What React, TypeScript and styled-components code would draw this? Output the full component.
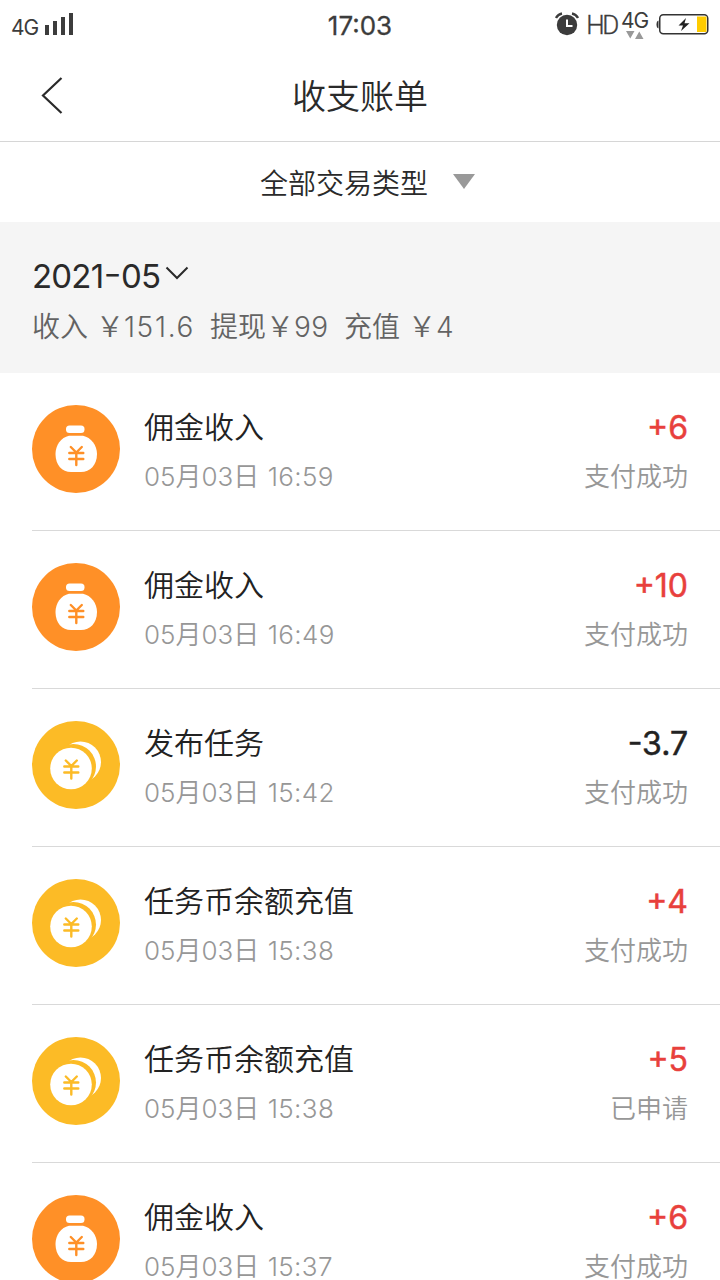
import React from 'react';
import styled, { createGlobalStyle } from 'styled-components';

const GlobalStyle = createGlobalStyle`
  * { box-sizing: border-box; }
  html, body { margin: 0; padding: 0; background: #fff; }
  body {
    height: 1280px;
    overflow: hidden;
    font-family: Inter, "Noto Sans CJK SC", sans-serif;
    color: #2a2a2a;
  }
`;

const Screen = styled.main`
  width: 720px;
  height: 1280px;
  overflow: hidden;
  display: flex;
  flex-direction: column;
  background: #fff;
`;

const StatusBar = styled.header`
  flex: none;
  height: 50px;
  display: grid;
  grid-template-columns: 1fr auto 1fr;
  align-items: center;
  padding: 0 11px;
  color: #3c3c3c;
`;

const StatusGroup = styled.div<{ $end?: boolean }>`
  display: flex;
  align-items: center;
  height: 50px;
  justify-content: ${(p) => (p.$end ? 'flex-end' : 'flex-start')};
`;

const Carrier = styled.span`
  font: 400 21px/24px Inter, sans-serif;
  letter-spacing: -1px;
  margin: 5px 7px 0 0;
`;

const Clock = styled.span`
  font: 400 26px/30px Inter, sans-serif;
  font-feature-settings: "case";
  -webkit-text-stroke: 0.3px currentColor;
  padding-top: 2px;
`;

const HdLabel = styled.span`
  font: 300 26px/28px Roboto, sans-serif;
  -webkit-text-stroke: 0.3px currentColor;
  letter-spacing: -2.4px;
  margin: 0 4px 0 7px;
`;

const Network = styled.div`
  display: flex;
  flex-direction: column;
  align-items: center;
  gap: 1px;
  width: 27px;
  margin: 0 8px 0 0;
`;

const NetworkLabel = styled.span`
  font: 400 21px/18px Inter, sans-serif;
  letter-spacing: -1px;
`;

const NavBar = styled.nav`
  flex: none;
  height: 92px;
  display: grid;
  grid-template-columns: 104px 1fr 104px;
  align-items: center;
  border-bottom: 1px solid #d6d6d6;
`;

const BackButton = styled.button`
  border: 0;
  background: none;
  padding: 0 0 2px 40px;
  height: 91px;
  display: flex;
  align-items: center;
`;

const Title = styled.h1`
  margin: 0;
  padding-top: 2px;
  text-align: center;
  font-size: 34px;
  line-height: 48px;
  font-weight: 350;
`;

const Filter = styled.button`
  flex: none;
  height: 80px;
  border: 0;
  background: #fff;
  display: flex;
  justify-content: center;
  align-items: center;
  gap: 25px;
  padding: 4px 0 0 15px;
  font: 350 28px/40px Inter, "Noto Sans CJK SC", sans-serif;
  color: #2a2a2a;
`;

const FilterArrow = styled.svg`
  display: block;
  flex: none;
  margin-bottom: 6px;
`;

const Summary = styled.section`
  flex: none;
  height: 151px;
  background: #f5f5f5;
  padding: 32px;
`;

const Month = styled.div`
  display: flex;
  align-items: center;
  gap: 5px;
  height: 44px;
  font-size: 33px;
  line-height: 44px;
  font-weight: 400;
  letter-spacing: -0.8px;
  color: #2a2a2a;
`;

const MonthDash = styled.span`
  font-size: 41px;
  line-height: 0;
  font-weight: 300;
`;

const MonthArrow = styled.svg`
  display: block;
  flex: none;
  margin-bottom: 6px;
`;

const Totals = styled.div`
  display: flex;
  margin-top: 9px;
  font-size: 28px;
  line-height: 40px;
  font-weight: 350;
  color: #636363;
  white-space: pre;
`;

const Total = styled.span<{ $width: number }>`
  width: ${(p) => p.$width}px;
`;

const Figure = styled.span<{ $spacing: number }>`
  letter-spacing: ${(p) => p.$spacing}px;
`;

const List = styled.ul`
  list-style: none;
  margin: 0;
  padding: 0 0 0 32px;
`;

const Row = styled.li`
  height: 158px;
  display: flex;
  align-items: flex-start;
  padding: 32px 32px 0 0;
  border-bottom: 1px solid #d9d9d9;
`;

const Details = styled.div`
  flex: 1;
  padding-left: 24px;
`;

const Outcome = styled.div`
  text-align: right;
`;

const Kind = styled.div`
  font-size: 30px;
  line-height: 44px;
  font-weight: 350;
  color: #222;
`;

const Meta = styled.div`
  margin-top: 8px;
  font-size: 26px;
  line-height: 40px;
  font-weight: 350;
  color: #979797;
`;

const Time = styled.span`
  letter-spacing: 0.4px;
  padding-left: 1px;
`;

const Amount = styled.div<{ $income: boolean }>`
  padding-top: 1px;
  font-size: 32px;
  line-height: 43px;
  font-weight: 400;
  -webkit-text-stroke: 0.5px currentColor;
  font-feature-settings: "case";
  color: ${(p) => (p.$income ? '#e8403c' : '#222')};
`;

const Glyph = styled.svg`
  display: block;
  flex: none;
`;

const SignalIcon = () => (
  <Glyph width="30" height="26" viewBox="0 0 30 26" fill="#3c3c3c">
    <rect x="0" y="13" width="4" height="10" />
    <rect x="8" y="9" width="4" height="14" />
    <rect x="16" y="5" width="4" height="18" />
    <rect x="24" y="1" width="4" height="22" />
  </Glyph>
);

const AlarmIcon = () => (
  <Glyph width="24" height="26" viewBox="0 0 24 26" fill="none">
    <circle cx="12" cy="13" r="10.200" fill="#3c3c3c" />
    <path d="M1 6A9 9 0 0 1 7 1.500M23 6A9 9 0 0 0 17 1.500" stroke="#3c3c3c" strokeWidth="2.400" />
    <path d="M12 7.500V14H17.500" stroke="#fff" strokeWidth="2" />
  </Glyph>
);

const TrafficIcon = () => (
  <Glyph width="18" height="8" viewBox="0 0 18 8" fill="#999">
    <path d="M0 0H8.500L4.250 7.500ZM9 8H17.500L13.250 .5Z" />
  </Glyph>
);

const BatteryIcon = () => (
  <Glyph width="53" height="23" viewBox="0 0 53 23">
    <path d="M2.500 6.500Q.5 7 .5 10.500T2.500 14.500Z" fill="#333" />
    <rect x="3.750" y=".75" width="48" height="19" rx="3.500" fill="#fff" stroke="#333" strokeWidth="1.500" />
    <rect x="41" y="2.500" width="9.500" height="15.500" fill="#fc0" />
    <path d="M30 4L22.500 11.500H27L25 17L33.500 9.300H28.500Z" fill="#222" />
  </Glyph>
);

const Yen = ({ x, y, color }: { x: number; y: number; color: string }) => (
  <path
    transform={`translate(${x} ${y})`}
    d="M-5.500 -9L0 -3.500L5.500 -9M-7 -3H7M-7 3H7M0 -3.500V9"
    fill="none"
    stroke={color}
    strokeWidth="2.400"
    strokeLinecap="round"
    strokeLinejoin="round"
  />
);

const BagIcon = () => (
  <Glyph width="88" height="88" viewBox="0 0 88 88">
    <circle cx="44" cy="44" r="44" fill="#ff9027" />
    <rect x="34" y="20.500" width="18.500" height="7.500" rx="3.500" fill="#fff" />
    <path d="M37 30.700H51C59 32.500 65 40 65 49C65 60 58 67 49 67H39C30 67 23.500 60 23.500 49C23.500 40 29 32.500 37 30.700Z" fill="#fff" />
    <Yen x={44.3} y={51} color="#ff9027" />
  </Glyph>
);

const CoinsIcon = () => (
  <Glyph width="88" height="88" viewBox="0 0 88 88">
    <circle cx="44" cy="44" r="44" fill="#fcbb26" />
    <circle cx="48.500" cy="41" r="20.500" fill="#fff" />
    <circle cx="41.500" cy="45.500" r="22.500" fill="#fcbb26" />
    <circle cx="39" cy="47.500" r="20.800" fill="#fff" />
    <Yen x={39.3} y={48.5} color="#fcbb26" />
  </Glyph>
);

type Entry = { icon: 'bag' | 'coins'; kind: string; time: string; amount: string; state: string };

const entries: Entry[] = [
  { icon: 'bag', kind: '佣金收入', time: '16:59', amount: '+6', state: '支付成功' },
  { icon: 'bag', kind: '佣金收入', time: '16:49', amount: '+10', state: '支付成功' },
  { icon: 'coins', kind: '发布任务', time: '15:42', amount: '-3.7', state: '支付成功' },
  { icon: 'coins', kind: '任务币余额充值', time: '15:38', amount: '+4', state: '支付成功' },
  { icon: 'coins', kind: '任务币余额充值', time: '15:38', amount: '+5', state: '已申请' },
  { icon: 'bag', kind: '佣金收入', time: '15:37', amount: '+6', state: '支付成功' },
];

const totals = [
  { label: '收入 \uFFE5', value: '151.6', width: 178, spacing: 1.7 },
  { label: '提现\uFFE5', value: '99', width: 134, spacing: 0.4 },
  { label: '充值 \uFFE5', value: '4', width: 120, spacing: 0 },
];

export default function App() {
  return (
    <Screen>
      <GlobalStyle />
      <StatusBar>
        <StatusGroup>
          <Carrier>4G</Carrier>
          <SignalIcon />
        </StatusGroup>
        <Clock>17:03</Clock>
        <StatusGroup $end>
          <AlarmIcon />
          <HdLabel>HD</HdLabel>
          <Network>
            <NetworkLabel>4G</NetworkLabel>
            <TrafficIcon />
          </Network>
          <BatteryIcon />
        </StatusGroup>
      </StatusBar>
      <NavBar>
        <BackButton aria-label="返回">
          <Glyph width="24" height="38" viewBox="0 0 24 38" fill="none" stroke="#2a2a2a" strokeWidth="2.200">
            <path d="M21.500 2L3 19.500L21.500 37" />
          </Glyph>
        </BackButton>
        <Title>收支账单</Title>
      </NavBar>
      <Filter>
        全部交易类型
        <FilterArrow width="22" height="15" viewBox="0 0 22 15" fill="#999">
          <path d="M0 0H22L11 15Z" />
        </FilterArrow>
      </Filter>
      <Summary>
        <Month>
          <span>2021<MonthDash>-</MonthDash>05</span>
          <MonthArrow width="24" height="14" viewBox="0 0 24 14" fill="none" stroke="#2a2a2a" strokeWidth="2">
            <path d="M1.500 1.500L12 12L22.500 1.500" />
          </MonthArrow>
        </Month>
        <Totals>
          {totals.map((t) => (
            <Total key={t.label} $width={t.width}>
              {t.label}
              <Figure $spacing={t.spacing}>{t.value}</Figure>
            </Total>
          ))}
        </Totals>
      </Summary>
      <List>
        {entries.map((e, i) => (
          <Row key={i}>
            {e.icon === 'bag' ? <BagIcon /> : <CoinsIcon />}
            <Details>
              <Kind>{e.kind}</Kind>
              <Meta>05月03日 <Time>{e.time}</Time></Meta>
            </Details>
            <Outcome>
              <Amount $income={e.amount.startsWith('+')}>{e.amount}</Amount>
              <Meta>{e.state}</Meta>
            </Outcome>
          </Row>
        ))}
      </List>
    </Screen>
  );
}
